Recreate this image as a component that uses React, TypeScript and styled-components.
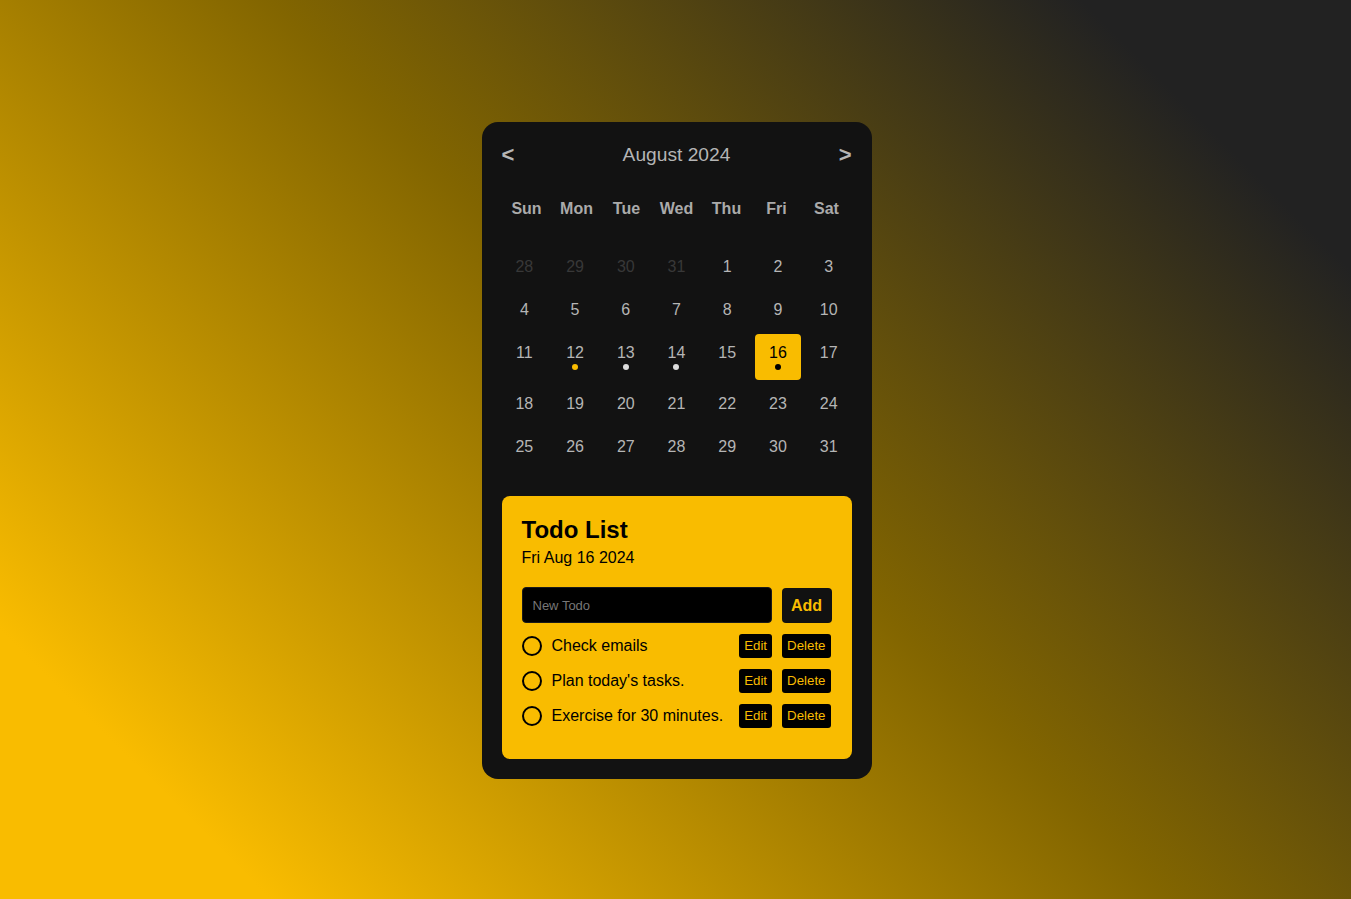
import React, { useState } from 'react';
import styled, { createGlobalStyle } from 'styled-components';

const WEEKDAYS = ['Sun', 'Mon', 'Tue', 'Wed', 'Thu', 'Fri', 'Sat'];
const SELECTED = 16;
const DOTS: Record<number, 'accent' | 'light'> = { 12: 'accent', 13: 'light', 14: 'light', 16: 'light' };

interface Todo {
  id: number;
  text: string;
}

const INITIAL_TODOS: Todo[] = [
  { id: 1, text: 'Check emails' },
  { id: 2, text: "Plan today's tasks." },
  { id: 3, text: 'Exercise for 30 minutes.' },
];

const GlobalStyle = createGlobalStyle`
  html, body {
    margin: 0;
    padding: 0;
    height: 100%;
  }
  body {
    font-family: "Liberation Sans", Arial, sans-serif;
  }
  #root {
    height: 100%;
  }
  * {
    box-sizing: border-box;
  }
`;

const Page = styled.main`
  height: 100vh;
  display: flex;
  justify-content: center;
  align-items: flex-start;
  padding: 122px 0 0 2px;
  background: linear-gradient(45deg, #f9bc00 12%, #826500 52%, #222222 88%);
`;

const Card = styled.section`
  width: 390px;
  background: #121212;
  border-radius: 16px;
  padding: 20px;
`;

const Header = styled.div`
  display: flex;
  align-items: center;
  justify-content: space-between;
  height: 26px;
  margin-bottom: 22px;
`;

const NavButton = styled.button`
  background: none;
  border: none;
  padding: 0;
  font-family: inherit;
  font-size: 22px;
  font-weight: bold;
  color: #b5b5b5;
  cursor: pointer;
  line-height: 26px;
`;

const MonthTitle = styled.div`
  font-size: 19.2px;
  color: #b5b5b5;
  line-height: 26px;
`;

const WeekRow = styled.div`
  display: grid;
  grid-template-columns: repeat(7, 1fr);
  margin-bottom: 20px;
`;

const WeekDay = styled.div`
  text-align: center;
  font-size: 16px;
  font-weight: bold;
  color: #aaaaaa;
  line-height: 18px;
  padding: 10px 0;
`;

const DayGrid = styled.div`
  display: grid;
  grid-template-columns: repeat(7, 1fr);
  gap: 5px;
`;

const Day = styled.div<{ $muted?: boolean; $selected?: boolean }>`
  display: flex;
  flex-direction: column;
  align-items: center;
  padding: 10px 0;
  font-size: 16px;
  line-height: 18px;
  border-radius: 4px;
  cursor: pointer;
  color: ${(p) => (p.$selected ? '#000' : p.$muted ? '#383838' : '#b5b5b5')};
  background: ${(p) => (p.$selected ? '#f9bc00' : 'transparent')};
`;

const Dot = styled.span<{ $color: string }>`
  width: 6px;
  height: 6px;
  margin-top: 2px;
  border-radius: 50%;
  background: ${(p) => p.$color};
`;

const TodoBox = styled.div`
  margin-top: 30px;
  background: #f9bc00;
  border-radius: 8px;
  padding: 20px 20px 21px;
  color: #000;
`;

const TodoTitle = styled.h2`
  margin: 0;
  font-size: 24px;
  line-height: 28px;
  font-weight: bold;
`;

const TodoDate = styled.div`
  margin-top: 5px;
  font-size: 16px;
  line-height: 18px;
`;

const InputRow = styled.div`
  display: flex;
  gap: 10px;
  margin-top: 20px;
`;

const TodoInput = styled.input`
  flex: 1;
  height: 36px;
  background: #000;
  border: 1px solid #1a1a1a;
  border-radius: 4px;
  padding: 0 10px;
  font-family: inherit;
  font-size: 13px;
  color: #ddd;
  outline: none;

  &::placeholder {
    color: #777;
  }
`;

const AddButton = styled.button`
  width: 50px;
  height: 35px;
  margin-top: 1px;
  background: #111;
  border: none;
  border-radius: 4px;
  font-family: inherit;
  font-size: 16px;
  font-weight: bold;
  color: #f9bc00;
  cursor: pointer;
`;

const List = styled.ul`
  list-style: none;
  margin: 0;
  padding: 10px 0;
  display: flex;
  flex-direction: column;
  gap: 10px;
`;

const Item = styled.li`
  display: flex;
  align-items: center;
  height: 25px;
  padding-right: 1px;
`;

const Check = styled.span`
  width: 20px;
  height: 20px;
  border: 2px solid #000;
  border-radius: 50%;
  flex-shrink: 0;
`;

const ItemText = styled.span`
  flex: 1;
  margin-left: 10px;
  font-size: 16px;
  line-height: 18px;
`;

const SmallButton = styled.button`
  height: 24px;
  margin-left: 10px;
  padding: 0 5px;
  background: #000;
  border: none;
  border-radius: 3px;
  font-family: inherit;
  font-size: 13.3px;
  color: #f9bc00;
  cursor: pointer;
`;

const buildDays = () => {
  const cells: { day: number; muted: boolean }[] = [];
  [28, 29, 30, 31].forEach((d) => cells.push({ day: d, muted: true }));
  for (let d = 1; d <= 31; d++) cells.push({ day: d, muted: false });
  return cells;
};

const dotColor = (day: number) => {
  if (day === SELECTED) return '#000';
  return DOTS[day] === 'accent' ? '#f9bc00' : '#dddddd';
};

const App = () => {
  const [todos] = useState<Todo[]>(INITIAL_TODOS);
  const days = buildDays();

  return (
    <>
      <GlobalStyle />
      <Page>
        <Card>
          <Header>
            <NavButton>&lt;</NavButton>
            <MonthTitle>August 2024</MonthTitle>
            <NavButton>&gt;</NavButton>
          </Header>
          <WeekRow>
            {WEEKDAYS.map((w) => (
              <WeekDay key={w}>{w}</WeekDay>
            ))}
          </WeekRow>
          <DayGrid>
            {days.map((c, i) => (
              <Day key={i} $muted={c.muted} $selected={!c.muted && c.day === SELECTED}>
                {c.day}
                {!c.muted && DOTS[c.day] && <Dot $color={dotColor(c.day)} />}
              </Day>
            ))}
          </DayGrid>
          <TodoBox>
            <TodoTitle>Todo List</TodoTitle>
            <TodoDate>Fri Aug 16 2024</TodoDate>
            <InputRow>
              <TodoInput placeholder="New Todo" />
              <AddButton>Add</AddButton>
            </InputRow>
            <List>
              {todos.map((t) => (
                <Item key={t.id}>
                  <Check />
                  <ItemText>{t.text}</ItemText>
                  <SmallButton>Edit</SmallButton>
                  <SmallButton>Delete</SmallButton>
                </Item>
              ))}
            </List>
          </TodoBox>
        </Card>
      </Page>
    </>
  );
};

export default App;
